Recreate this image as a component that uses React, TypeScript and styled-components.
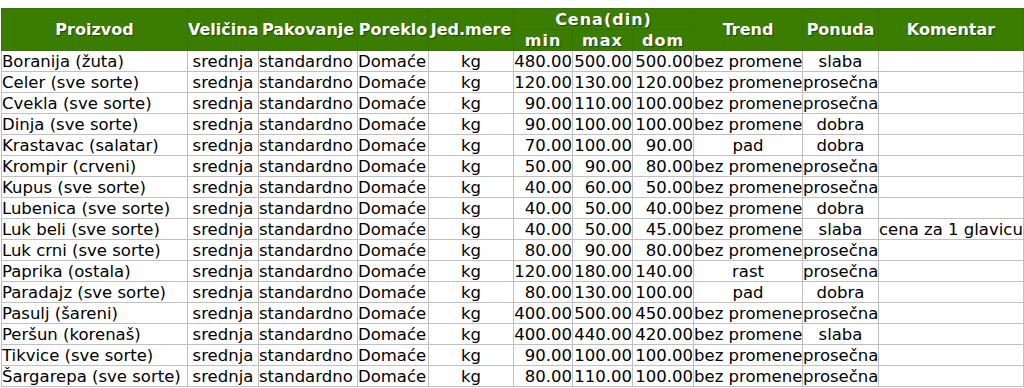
import React from 'react';
import styled, { createGlobalStyle } from 'styled-components';

const GlobalStyle = createGlobalStyle`
    html, body {
        margin: 0;
        padding: 0;
        background: #ffffff;
    }
    body {
        font-family: "DejaVu Sans", Verdana, sans-serif;
        color: #000000;
    }
`

const Page = styled.main`
    padding: 8px 0 0 1px;
    width: 1024px;
    height: 388px;
    overflow: hidden;
    box-sizing: border-box;
`

const Table = styled.table`
    border-collapse: collapse;
    table-layout: fixed;
    width: 1022px;
    font-size: 16.5px;
    border-top: 1px solid #c8c8c8;
`

const HeadCell = styled.th<{ $spread?: boolean }>`
    background: #3a7d00;
    color: #ffffff;
    font-weight: bold;
    font-size: 16px;
    letter-spacing: ${p => p.$spread ? '1px' : '0'};
    text-align: center;
    padding: 0;
    height: 20px;
    line-height: 19px;
    border: 1px solid #357200;
    text-shadow: 1px 1px 1px rgba(0, 0, 0, 0.45);
    white-space: nowrap;
    overflow: hidden;
`

type align = 'left' | 'center' | 'right';

const Cell = styled.td<{ $align?: align }>`
    padding: 0;
    height: 20px;
    line-height: 19px;
    text-align: ${p => p.$align || 'left'};
    border: 1px solid #c0c0c0;
    white-space: nowrap;
    overflow: hidden;
`

type row = {
    name: string;
    min: string;
    max: string;
    dom: string;
    trend: string;
    ponuda: string;
    komentar?: string;
}

const rows: row[] = [
    { name: 'Boranija (žuta)', min: '480.00', max: '500.00', dom: '500.00', trend: 'bez promene', ponuda: 'slaba' },
    { name: 'Celer (sve sorte)', min: '120.00', max: '130.00', dom: '120.00', trend: 'bez promene', ponuda: 'prosečna' },
    { name: 'Cvekla (sve sorte)', min: '90.00', max: '110.00', dom: '100.00', trend: 'bez promene', ponuda: 'prosečna' },
    { name: 'Dinja (sve sorte)', min: '90.00', max: '100.00', dom: '100.00', trend: 'bez promene', ponuda: 'dobra' },
    { name: 'Krastavac (salatar)', min: '70.00', max: '100.00', dom: '90.00', trend: 'pad', ponuda: 'dobra' },
    { name: 'Krompir (crveni)', min: '50.00', max: '90.00', dom: '80.00', trend: 'bez promene', ponuda: 'prosečna' },
    { name: 'Kupus (sve sorte)', min: '40.00', max: '60.00', dom: '50.00', trend: 'bez promene', ponuda: 'prosečna' },
    { name: 'Lubenica (sve sorte)', min: '40.00', max: '50.00', dom: '40.00', trend: 'bez promene', ponuda: 'dobra' },
    { name: 'Luk beli (sve sorte)', min: '40.00', max: '50.00', dom: '45.00', trend: 'bez promene', ponuda: 'slaba', komentar: 'cena za 1 glavicu' },
    { name: 'Luk crni (sve sorte)', min: '80.00', max: '90.00', dom: '80.00', trend: 'bez promene', ponuda: 'prosečna' },
    { name: 'Paprika (ostala)', min: '120.00', max: '180.00', dom: '140.00', trend: 'rast', ponuda: 'prosečna' },
    { name: 'Paradajz (sve sorte)', min: '80.00', max: '130.00', dom: '100.00', trend: 'pad', ponuda: 'dobra' },
    { name: 'Pasulj (šareni)', min: '400.00', max: '500.00', dom: '450.00', trend: 'bez promene', ponuda: 'prosečna' },
    { name: 'Peršun (korenaš)', min: '400.00', max: '440.00', dom: '420.00', trend: 'bez promene', ponuda: 'slaba' },
    { name: 'Tikvice (sve sorte)', min: '90.00', max: '100.00', dom: '100.00', trend: 'bez promene', ponuda: 'prosečna' },
    { name: 'Šargarepa (sve sorte)', min: '80.00', max: '110.00', dom: '100.00', trend: 'bez promene', ponuda: 'prosečna' },
]

// column widths taken from the screenshot
const widths = [186, 71, 99, 71, 85, 59, 60, 61, 109, 76, 145];

const App = () => {
    return (
        <Page>
            <GlobalStyle />
            <Table>
                <colgroup>
                    {widths.map((w, i) => <col key={i} style={{ width: w }} />)}
                </colgroup>
                <thead>
                    <tr>
                        <HeadCell rowSpan={2}>Proizvod</HeadCell>
                        <HeadCell rowSpan={2}>Veličina</HeadCell>
                        <HeadCell rowSpan={2}>Pakovanje</HeadCell>
                        <HeadCell rowSpan={2}>Poreklo</HeadCell>
                        <HeadCell rowSpan={2}>Jed.mere</HeadCell>
                        <HeadCell colSpan={3} $spread>Cena(din)</HeadCell>
                        <HeadCell rowSpan={2}>Trend</HeadCell>
                        <HeadCell rowSpan={2}>Ponuda</HeadCell>
                        <HeadCell rowSpan={2}>Komentar</HeadCell>
                    </tr>
                    <tr>
                        <HeadCell $spread>min</HeadCell>
                        <HeadCell $spread>max</HeadCell>
                        <HeadCell $spread>dom</HeadCell>
                    </tr>
                </thead>
                <tbody>
                    {rows.map(r => (
                        <tr key={r.name}>
                            <Cell>{r.name}</Cell>
                            <Cell $align='center'>srednja</Cell>
                            <Cell>standardno</Cell>
                            <Cell>Domaće</Cell>
                            <Cell $align='center'>kg</Cell>
                            <Cell $align='right'>{r.min}</Cell>
                            <Cell $align='right'>{r.max}</Cell>
                            <Cell $align='right'>{r.dom}</Cell>
                            <Cell $align='center'>{r.trend}</Cell>
                            <Cell $align='center'>{r.ponuda}</Cell>
                            <Cell>{r.komentar}</Cell>
                        </tr>
                    ))}
                </tbody>
            </Table>
        </Page>
    )
}

export default App;
